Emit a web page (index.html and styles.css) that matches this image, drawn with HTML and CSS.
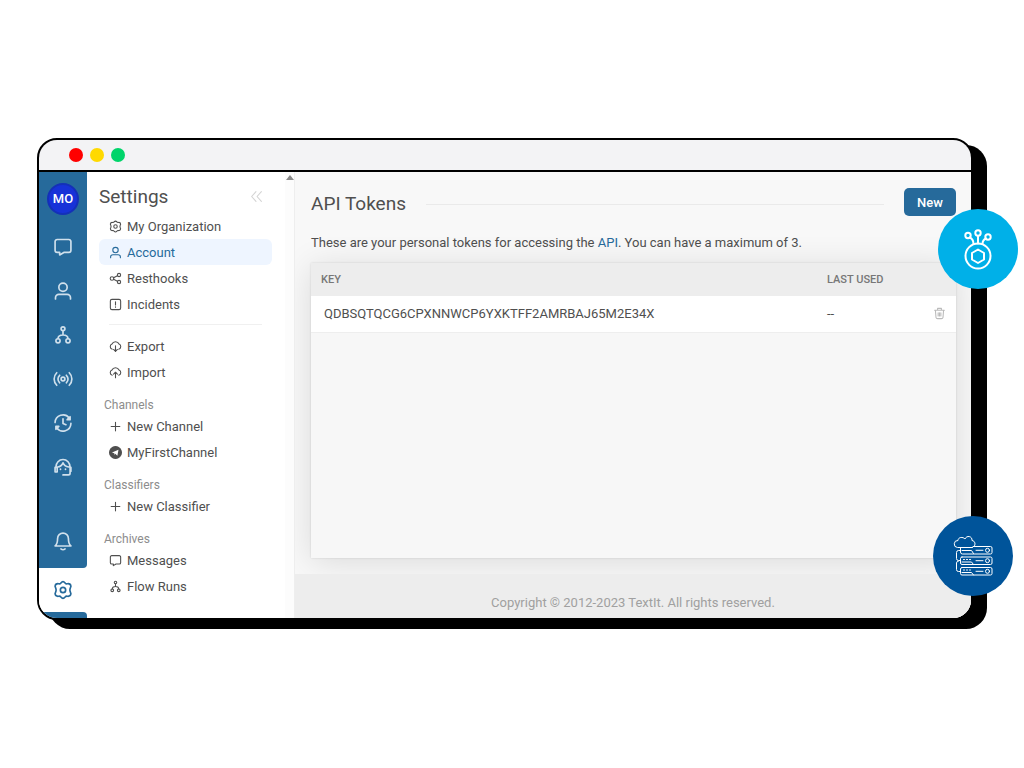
FILE: index.html
```html
<!DOCTYPE html>
<html lang="en">
<head>
<meta charset="utf-8">
<title>API Tokens</title>
<link rel="stylesheet" href="styles.css">
</head>
<body>
<svg class="defs" aria-hidden="true">
  <symbol id="message" viewBox="0 0 24 24"><path d="M5 3h14A2.500 2.500 0 0 1 21.500 5.500v10.500a2.500 2.500 0 0 1-2.500 2.500H13L8 21.500V18.500H5A2.500 2.500 0 0 1 2.500 16V5.500A2.500 2.500 0 0 1 5 3z"/></symbol>
  <symbol id="user" viewBox="0 0 24 24"><circle cx="12" cy="7.500" r="5"/><path d="M3 21.500v-1.500a4 4 0 0 1 4-4h10a4 4 0 0 1 4 4v1.500"/></symbol>
  <symbol id="flow" viewBox="0 0 24 24"><circle cx="12" cy="4.500" r="2.300"/><circle cx="6" cy="19" r="2.500"/><circle cx="18" cy="19" r="2.500"/><path d="M12 7v5M6 16.500c0-3 2-4.500 6-4.500s6 1.500 6 4.500"/></symbol>
  <symbol id="gear" viewBox="0 0 24 24"><circle cx="12" cy="12" r="3.200"/><path d="M9.500 3.500Q12 .500 14.500 3.500Q15.500 4.800 17.200 4.500Q21 4 21.500 7.500L20.500 10.500Q20 12 20.500 13.500L21.500 16.500Q21 20 17.200 19.500Q15.500 19.200 14.500 20.500Q12 23.500 9.500 20.500Q8.500 19.200 6.800 19.500Q3 20 2.500 16.500L3.500 13.500Q4 12 3.500 10.500L2.500 7.500Q3 4 6.800 4.500Q8.500 4.800 9.500 3.500z"/></symbol>
</svg>
<div class="window">
  <header class="titlebar"><span class="dot red"></span><span class="dot yellow"></span><span class="dot green"></span></header>
  <div class="app">
    <nav class="rail" aria-label="Main">
      <div class="rail-top">
        <a class="rail-brand" href="#"><span class="avatar">MO</span></a>
        <a class="rail-link" href="#" aria-label="Messages"><svg class="icon-l"><use href="#message"/></svg></a>
        <a class="rail-link" href="#" aria-label="Contacts"><svg class="icon-l"><use href="#user"/></svg></a>
        <a class="rail-link" href="#" aria-label="Flows"><svg class="icon-l"><use href="#flow"/></svg></a>
        <a class="rail-link" href="#" aria-label="Triggers"><svg class="icon-l" viewBox="0 0 24 24"><circle cx="12" cy="12" r="2.300"/><path d="M8 7.500a6 6 0 0 0 0 9M16 7.500a6 6 0 0 1 0 9M4.500 4.500a10.500 10.500 0 0 0 0 15M19.500 4.500a10.500 10.500 0 0 1 0 15"/></svg></a>
        <a class="rail-link" href="#" aria-label="Campaigns"><svg class="icon-l" viewBox="0 0 24 24"><path d="M2.500 11.500A9.500 9.500 0 0 1 19.500 6M21.500 12.500A9.500 9.500 0 0 1 4.500 18M12 7v5.500l3.500 1.500"/><path d="M20.500 4.500V8H17zM3.500 19.500V16H7z" fill="currentColor"/></svg></a>
        <a class="rail-link" href="#" aria-label="Tickets"><svg class="icon-l" viewBox="0 0 24 24"><path d="M3.500 12a8.500 9 0 0 1 17 0v7.500a2 2 0 0 1-2 2H12M4 12.500H2.500v5.500H5V12.500M20.500 12.500h1v4.500h-1M5.500 12c3.500-.5 5.500-2.500 6.500-5 1 3 3.500 4.500 7 5"/><path d="M9 14.500v.5M15 14.500v.5"/></svg></a>
        <a class="rail-link rail-bell" href="#" aria-label="Notifications"><svg class="icon-l" viewBox="0 0 24 24"><path d="M2.500 18c2.500-2 3-4 3-9a6.500 6.500 0 0 1 13 0c0 5 .5 7 3 9z"/><path d="M9.500 21.500c1.500 1.200 3.500 1.200 5 0"/></svg></a>
      </div>
      <a class="rail-link rail-active" href="#" aria-label="Settings" aria-current="page"><svg class="icon-l"><use href="#gear"/></svg></a>
      <div class="rail-end"></div>
    </nav>
    <aside class="menu">
      <div class="menu-body">
        <div class="menu-head"><h2 class="menu-title">Settings</h2><button class="collapse" aria-label="Collapse menu"><svg class="icon-s" viewBox="0 0 24 24"><path d="m11 3-8 9 8 9M21 3l-8 9 8 9"/></svg></button></div>
        <a class="item" href="#"><svg class="icon-s"><use href="#gear"/></svg>My Organization</a>
        <a class="item item-active" href="#"><svg class="icon-s"><use href="#user"/></svg>Account</a>
        <a class="item" href="#"><svg class="icon-s" viewBox="0 0 24 24"><circle cx="5.500" cy="12" r="3.300"/><circle cx="18.500" cy="5.500" r="3"/><circle cx="18.500" cy="18.500" r="3"/><path d="m8.500 10.500 7-3.500M8.500 13.500l7 3.500"/></svg>Resthooks</a>
        <a class="item" href="#"><svg class="icon-s" viewBox="0 0 24 24"><rect x="2.500" y="2.500" width="19" height="19" rx="3"/><path d="M12 7v6M12 16v1"/></svg>Incidents</a>
        <hr class="rule">
        <a class="item" href="#"><svg class="icon-s" viewBox="0 0 24 24"><path d="M6 17a5 5 0 0 1-.5-9.500 7 7 0 0 1 13 0 5 5 0 0 1-.5 9.500M12 10.500V21M8.500 17.500 12 21l3.500-3.500"/></svg>Export</a>
        <a class="item" href="#"><svg class="icon-s" viewBox="0 0 24 24"><path d="M6 17a5 5 0 0 1-.5-9.500 7 7 0 0 1 13 0 5 5 0 0 1-.5 9.500M12 21.500V11.500M8.500 15 12 11.500l3.500 3.500"/></svg>Import</a>
        <h3 class="label">Channels</h3>
        <a class="item" href="#"><svg class="icon-s" viewBox="0 0 24 24"><path d="M12 4v16M4 12h16"/></svg>New Channel</a>
        <a class="item" href="#"><svg class="icon-s" viewBox="0 0 24 24"><circle cx="12" cy="12" r="11" fill="currentColor"/><path d="m5.500 12 12-5-2 11-4-3.500-1 2-.8-3.200z" fill="#fff" stroke="none"/></svg>MyFirstChannel</a>
        <h3 class="label">Classifiers</h3>
        <a class="item" href="#"><svg class="icon-s" viewBox="0 0 24 24"><path d="M12 4v16M4 12h16"/></svg>New Classifier</a>
        <h3 class="label">Archives</h3>
        <a class="item" href="#"><svg class="icon-s"><use href="#message"/></svg>Messages</a>
        <a class="item" href="#"><svg class="icon-s"><use href="#flow"/></svg>Flow Runs</a>
      </div>
      <div class="track"><span class="arrow"></span></div>
    </aside>
    <div class="page">
      <main class="main">
        <div class="page-head"><h1 class="page-title">API Tokens</h1><span class="line"></span><button class="new">New</button></div>
        <p class="intro">These are your personal tokens for accessing the <a class="link" href="#">API</a>. You can have a maximum of 3.</p>
        <div class="panel">
          <table class="tokens">
            <thead><tr><th>KEY</th><th class="used">LAST USED</th><th class="action"></th></tr></thead>
            <tbody><tr><td class="key">QDBSQTQCG6CPXNNWCP6YXKTFF2AMRBAJ65M2E34X</td><td>--</td><td class="action"><button class="trash" aria-label="Delete token"><svg class="icon-s" viewBox="0 0 24 24"><path d="M3 6h18M8.500 5V2.500h7V5M4.500 6.500 5.500 19a3 3 0 0 0 3 2.500h7a3 3 0 0 0 3-2.500l1-12.500M9.500 10.500v6M12 10.500v6M14.500 10.500v6"/></svg></button></td></tr></tbody>
          </table>
        </div>
      </main>
      <footer class="footer">Copyright © 2012-2023 TextIt. All rights reserved.</footer>
    </div>
  </div>
  <div class="badge badge-ai"><svg class="badge-icon" viewBox="0 0 48 48"><circle cx="24" cy="31" r="12.500"/><path d="m24 24.500 6 3.500v6.500l-6 3.500-6-3.500V28zM24 18.500V11M19.500 19c0-4-1-5.500-4-6.500M28.500 19c0-3 1-4.500 3.500-5.500"/><circle cx="24" cy="8" r="2.700"/><circle cx="14" cy="10.500" r="2.700"/><circle cx="34" cy="12" r="2.700"/></svg></div>
  <div class="badge badge-server"><svg class="badge-icon thin" viewBox="0 0 48 48"><path d="M23.500 15.500H8.500a3.500 3.500 0 0 1 .5-7C9 5 14 4.500 16 7c1.500-4 7.500-3 7 1.500 3 .3 4 4 2 6"/><path d="M24 14.500h17.500a1.500 1.500 0 0 1 1.500 1.500v4.500a1.500 1.500 0 0 1-1.500 1.500h-28a2 2 0 0 1-2-2v-4"/><rect x="11.500" y="25" width="31.500" height="7.500" rx="1.500"/><rect x="11.500" y="35.500" width="31.500" height="7.500" rx="1.500"/><circle cx="38.500" cy="18.300" r="2"/><circle cx="38.500" cy="28.700" r="2"/><circle cx="38.500" cy="39.300" r="2"/><path d="M27 18.300h7M27 28.700h7M27 39.300h7M13 18.500h9.500l2 3M13 30h9.500l2 2.500M13 40.500h9.500l2 2.500M11.500 28.500H9.500A2 2 0 0 1 7.500 26.500v-6a2 2 0 0 1 2-2h2M11.500 39.500H9.500A2 2 0 0 1 7.500 37.500v-6.500a2 2 0 0 1 2-2M14.500 27.500h1M17.500 27.500h1M20.500 27.500h1M14.500 38h1M17.500 38h1M20.500 38h1"/></svg></div>
</div>
</body>
</html>
```
FILE: styles.css
```css
* { box-sizing: border-box; }
body { margin: 0; padding: 138px 51px 64px 37px; background: #fff; color: #4f4f4f; font-family: Roboto, "Liberation Sans", sans-serif; font-size: 13px; }
h1, h2, h3, p { margin: 0; font-weight: 400; }
a { color: inherit; text-decoration: none; }
button { border: 0; padding: 0; background: none; color: inherit; font: inherit; cursor: pointer; }
svg { fill: none; stroke: currentColor; stroke-width: 2; stroke-linecap: round; stroke-linejoin: round; }
.defs { position: absolute; width: 0; height: 0; }
.icon-l { width: 20px; height: 20px; }
.icon-s { width: 13px; height: 13px; flex: none; }

.window { position: relative; border: 2px solid #000; border-radius: 20px; box-shadow: 13px 8px 0 1px #000; background: #000; }
.titlebar { display: flex; align-items: center; gap: 7px; height: 32px; padding-left: 30px; background: #f3f3f5; border-bottom: 2px solid #000; border-radius: 18px 18px 0 0; }
.dot { width: 14px; height: 14px; border-radius: 50%; }
.red { background: #f00; }
.yellow { background: #ffd900; }
.green { background: #00d46a; }
.app { display: flex; overflow: hidden; border-radius: 0 0 18px 18px; background: #fff; }

.rail { display: flex; flex-direction: column; flex: none; width: 48px; color: #d0e0ec; }
.rail-top { display: flex; flex-direction: column; flex: 1; padding-bottom: 5px; background: #266a9b; border-radius: 0 0 4px 0; }
.rail-brand { display: flex; align-items: center; justify-content: center; height: 53px; }
.avatar { width: 32px; height: 32px; border: 2px solid #1430b8; border-radius: 50%; background: #1732d8; color: #fff; font-weight: 500; line-height: 28px; text-align: center; }
.rail-link { display: flex; align-items: center; justify-content: center; height: 44px; }
.rail-bell { margin-top: auto; }
.rail-active { color: #266a9b; background: #fff; }
.rail-end { height: 6px; background: #266a9b; border-radius: 0 4px 0 0; }

.menu { display: flex; flex: none; width: 208px; border-right: 1px solid #eee; }
.menu-body { flex: 1; padding: 8px 13px 19px 12px; }
.menu-head { display: flex; align-items: center; justify-content: space-between; height: 33px; padding-right: 9px; }
.menu-title { font-size: 19px; line-height: 32px; }
.collapse { display: flex; color: #d4d4d4; }
.item { display: flex; align-items: center; gap: 5px; height: 26px; padding-left: 10px; border-radius: 6px; }
.item-active { color: #266a9b; background: #eef5ff; }
.rule { height: 1px; margin: 7px 10px 8px; border: 0; background: #f0f0f0; }
.label { margin-top: 12px; padding-left: 5px; color: #8c8c8c; font-size: 12px; line-height: 16px; }
.track { width: 9px; padding-top: 3px; background: #fcfcfc; }
.arrow { display: block; width: 0; margin: 0 auto; border: 4px solid transparent; border-top: 0; border-bottom: 5px solid #888; }

.page { display: flex; flex-direction: column; flex: 1; min-width: 0; background: #f8f8f8; }
.main { display: flex; flex-direction: column; flex: 1; padding: 16px 15px 16px 16px; overflow: hidden; }
.page-head { display: flex; align-items: flex-start; gap: 20px; }
.page-title { font-size: 19px; line-height: 32px; }
.line { flex: 1; height: 1px; margin-top: 16px; background: #eaeaea; }
.new { width: 52px; height: 28px; border-radius: 5px; background: #266a9b; color: #fff; font-weight: 500; }
.intro { margin: 13px 0 10px; line-height: 20px; }
.link { color: #266a9b; }
.panel { flex: 1; background: #f7f7f7; box-shadow: 0 0 2px rgba(0,0,0,.12), 0 4px 32px rgba(0,0,0,.12); }
.tokens { width: 100%; border-collapse: collapse; }
.tokens th { height: 33px; padding: 0 10px; background: #ededed; color: #777; font-size: 11px; font-weight: 500; text-align: left; }
.tokens td { height: 36px; padding: 0 10px; background: #fff; border-bottom: 1px solid #eee; }
.tokens .key { padding-left: 13px; }
.tokens .used { width: 106px; }
.tokens .action { width: 33px; }
.trash { display: flex; color: #bbb; }
.footer { height: 44px; padding-top: 19px; background: #ededed; color: #a0a0a0; line-height: 20px; text-align: center; }

.badge { position: absolute; display: flex; align-items: center; justify-content: center; width: 80px; height: 80px; border-radius: 50%; color: #fff; }
.badge-ai { top: 69px; right: -47px; background: #00b0e8; }
.badge-server { top: 376px; right: -42px; background: #00549a; }
.badge-icon { width: 48px; height: 48px; }
.thin { stroke-width: 1; }
```
